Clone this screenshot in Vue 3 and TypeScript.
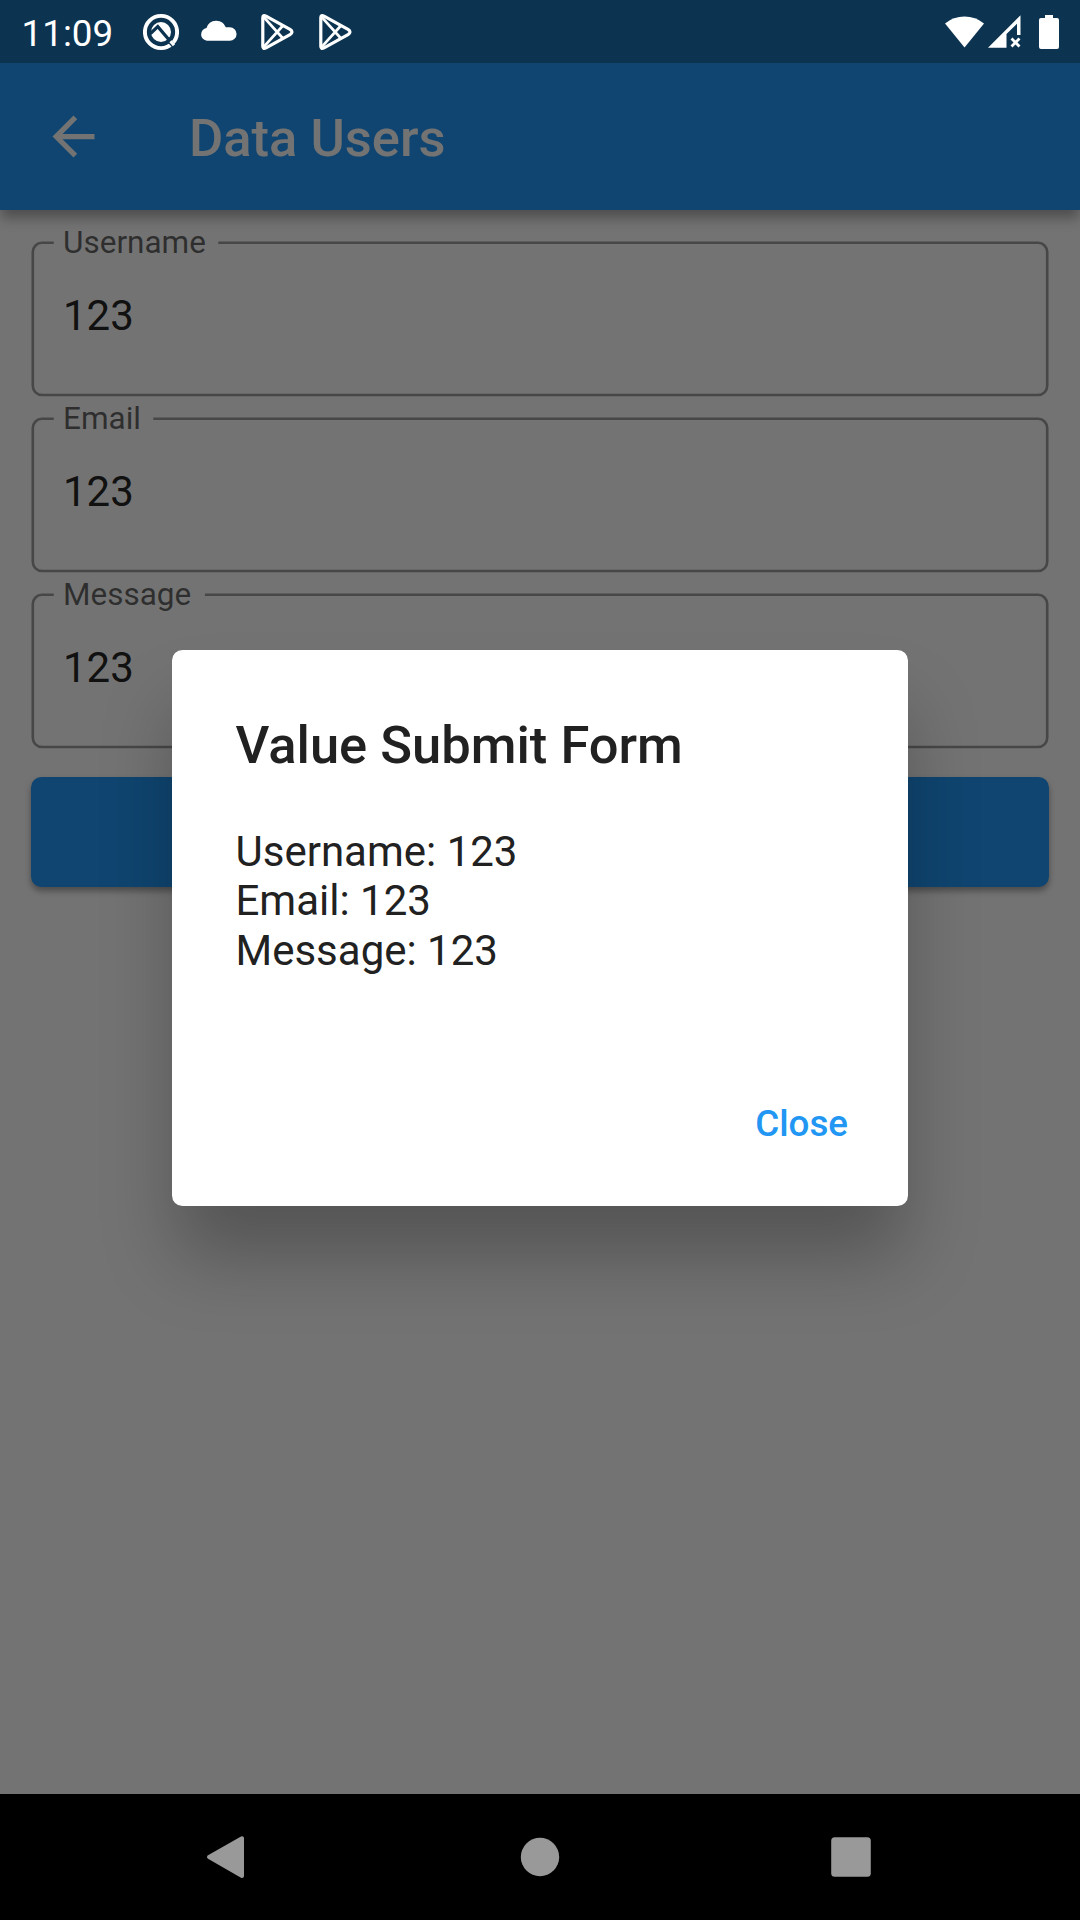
<script setup lang="ts">
interface Field {
  label: string
  value: string
  notchEnd: number
}

const fields: Field[] = [
  { label: 'Username', value: '123', notchEnd: 187.3 },
  { label: 'Email', value: '123', notchEnd: 122.3 },
  { label: 'Message', value: '123', notchEnd: 173.9 },
]

// Rounded outline, left open between the notch start and its end for the label.
const outline = (end: number): string =>
  `M${end} 1.8H1007A9.2 9.2 0 0 1 1016.2 11V144.8A9.2 9.2 0 0 1 1007 154H11A9.2 9.2 0 0 1 1.8 144.8V11A9.2 9.2 0 0 1 11 1.8H22.8`
</script>

<template>
  <div class="screen">
    <header class="status">
      <span class="clock">11:09</span>
      <div class="notifications">
        <svg width="36" height="38" viewBox="0 0 36 38">
          <circle cx="18" cy="19" r="16.1" fill="none" stroke="#fff" stroke-width="3.9" />
          <circle cx="18" cy="19" r="10" fill="#fff" />
          <path d="M7.5 20.5L14.8 13.6L30 31.5" fill="none" stroke="#0c3350" stroke-width="3.2" />
          <path d="M26.2 29.5L29.6 33.2" stroke="#0c3350" stroke-width="2" />
          <path d="M27.5 28.2L31 32.2" stroke="#fff" stroke-width="3" />
        </svg>
        <svg width="37" height="38" viewBox="0 0 37 38">
          <path d="M7 27.8A6.4 6.4 0 0 1 6.5 15.1A10.2 10.2 0 0 1 25.8 14.3L29.8 14.2A6.8 6.8 0 0 1 29.8 27.8Z" fill="#fff" />
        </svg>
        <svg v-for="n in 2" :key="n" width="36" height="38" viewBox="0 0 36 38">
          <g fill="none" stroke="#fff" stroke-width="3.2" stroke-linejoin="round">
            <path d="M3.8 4.8Q3.8 1.6 7 3.2L31 16.4Q35 19 31 21.6L7 34.8Q3.8 36.4 3.8 33.2Z" />
            <path d="M4.5 3.8L24.5 26M4.5 34.2L24.5 12" stroke-width="2.7" />
          </g>
        </svg>
      </div>
      <div class="system">
        <svg width="40" height="36" viewBox="0 0 40 36">
          <path d="M0 9.5A31 31 0 0 1 39 9.5L19.5 33.5Z" fill="#fff" />
        </svg>
        <svg width="34" height="36" viewBox="0 0 34 36">
          <path d="M0 33.7L32.5 1.2V21H29V9.7L18.5 20V33.7Z" fill="#fff" />
          <path d="M23.5 24.5L31.5 32.5M31.5 24.5L23.5 32.5" stroke="#fff" stroke-width="2.8" />
        </svg>
        <svg width="20" height="36" viewBox="0 0 20 36">
          <path d="M6 1H14V4H18Q20 4 20 6V33Q20 35 18 35H2Q0 35 0 33V6Q0 4 2 4H6Z" fill="#fff" />
        </svg>
      </div>
    </header>

    <main class="page">
      <div class="appbar">
        <svg class="back" width="63" height="63" viewBox="0 0 24 24">
          <path d="M20 11H7.83l5.59-5.59L12 4l-8 8 8 8 1.41-1.41L7.83 13H20v-2z" fill="#fafafa" />
        </svg>
        <h1 class="title">Data Users</h1>
      </div>
      <form class="form" @submit.prevent>
        <div v-for="field in fields" :key="field.label" class="field">
          <svg class="outline" width="1018" height="156" viewBox="0 0 1018 156">
            <path :d="outline(field.notchEnd)" fill="none" stroke="rgba(0,0,0,.38)" stroke-width="2.625" />
          </svg>
          <span class="label">{{ field.label }}</span>
          <span class="value">{{ field.value }}</span>
        </div>
        <button class="submit" type="submit" aria-label="Submit"></button>
      </form>
    </main>

    <div class="scrim">
      <section class="dialog" role="dialog">
        <h2 class="dialog-title">Value Submit Form</h2>
        <div class="dialog-body">
          <div v-for="field in fields" :key="field.label">{{ field.label }}: {{ field.value }}</div>
        </div>
        <button class="close" type="button">Close</button>
      </section>
    </div>

    <nav class="navbar">
      <svg width="46" height="46" viewBox="0 0 46 46">
        <path d="M36 4.3V41.9L3 23.1Z" fill="#999" stroke="#999" stroke-width="4" stroke-linejoin="round" />
      </svg>
      <svg width="46" height="46" viewBox="0 0 46 46"><circle cx="23" cy="23" r="19.2" fill="#999" /></svg>
      <svg width="46" height="46" viewBox="0 0 46 46"><rect x="3.2" y="3.2" width="39.6" height="39.6" rx="3.5" fill="#999" /></svg>
    </nav>
  </div>
</template>

<style>
body {
  margin: 0;
}
</style>

<style scoped>
.screen {
  position: relative;
  display: flex;
  flex-direction: column;
  width: 1080px;
  height: 1920px;
  overflow: hidden;
  font-family: Roboto, sans-serif;
  background: #fafafa;
}
.status {
  position: relative;
  z-index: 2;
  flex: none;
  display: flex;
  align-items: center;
  box-sizing: border-box;
  height: 63px;
  padding: 0 21px 0 21.6px;
  background: #0c3350;
  color: #fff;
}
.clock {
  width: 121.4px;
  padding-top: 4px;
  font-size: 36.75px;
  line-height: 44px;
}
.notifications {
  display: flex;
  gap: 22px;
  flex: 1;
}
.notifications svg:nth-child(2) {
  margin: 0 0 0 -1px;
}
.system {
  display: flex;
  align-items: center;
}
.system svg:nth-child(2) {
  margin-left: 3px;
}
.system svg:nth-child(3) {
  margin-left: 17px;
}
.page {
  flex: 1;
  display: flex;
  flex-direction: column;
}
.appbar {
  flex: none;
  display: flex;
  align-items: center;
  height: 147px;
  padding-left: 42px;
  background: #2196f3;
  box-shadow: 0 9px 12px -1px rgba(0, 0, 0, 0.32);
}
.title {
  margin: 3px 0 0 84px;
  font-size: 52.5px;
  font-weight: 500;
  line-height: 62px;
  color: #fafafa;
}
.form {
  display: flex;
  flex-direction: column;
  padding: 31px 31px 0;
}
.field {
  position: relative;
  display: flex;
  flex-direction: column;
  height: 156px;
  margin-bottom: 20px;
  padding-left: 32px;
}
.outline {
  position: absolute;
  left: 0;
  top: 0;
}
.label {
  margin-top: -17px;
  font-size: 31.5px;
  line-height: 37px;
  color: rgba(0, 0, 0, 0.6);
}
.value {
  margin-top: 30px;
  font-size: 42px;
  line-height: 49px;
  color: rgba(0, 0, 0, 0.87);
}
.submit {
  height: 110px;
  margin-top: 8px;
  border: 0;
  border-radius: 10.5px;
  background: #2196f3;
  box-shadow: 0 4px 6px rgba(0, 0, 0, 0.35);
}
.scrim {
  position: absolute;
  inset: 0 0 126px;
  display: flex;
  align-items: flex-start;
  justify-content: center;
  background: rgba(0, 0, 0, 0.54);
}
.dialog {
  display: flex;
  flex-direction: column;
  box-sizing: border-box;
  width: 736px;
  height: 556px;
  margin-top: 650px;
  padding: 64px 63.5px 0;
  border-radius: 10.5px;
  background: #fff;
  color: #212121;
  box-shadow: 0 55px 75px -5px rgba(0, 0, 0, 0.27);
}
.dialog-title {
  margin: 0;
  font-size: 52.5px;
  font-weight: 500;
  line-height: 62px;
}
.dialog-body {
  margin-top: 50.5px;
  font-size: 42px;
  line-height: 49.5px;
}
.close {
  align-self: flex-end;
  margin: 126.5px -3.5px 0 0;
  padding: 0;
  border: 0;
  background: none;
  font: 500 36.75px/44px Roboto, sans-serif;
  color: #2196f3;
}
.navbar {
  flex: none;
  display: flex;
  align-items: center;
  justify-content: center;
  gap: 265px;
  height: 126px;
  background: #000;
}
</style>
